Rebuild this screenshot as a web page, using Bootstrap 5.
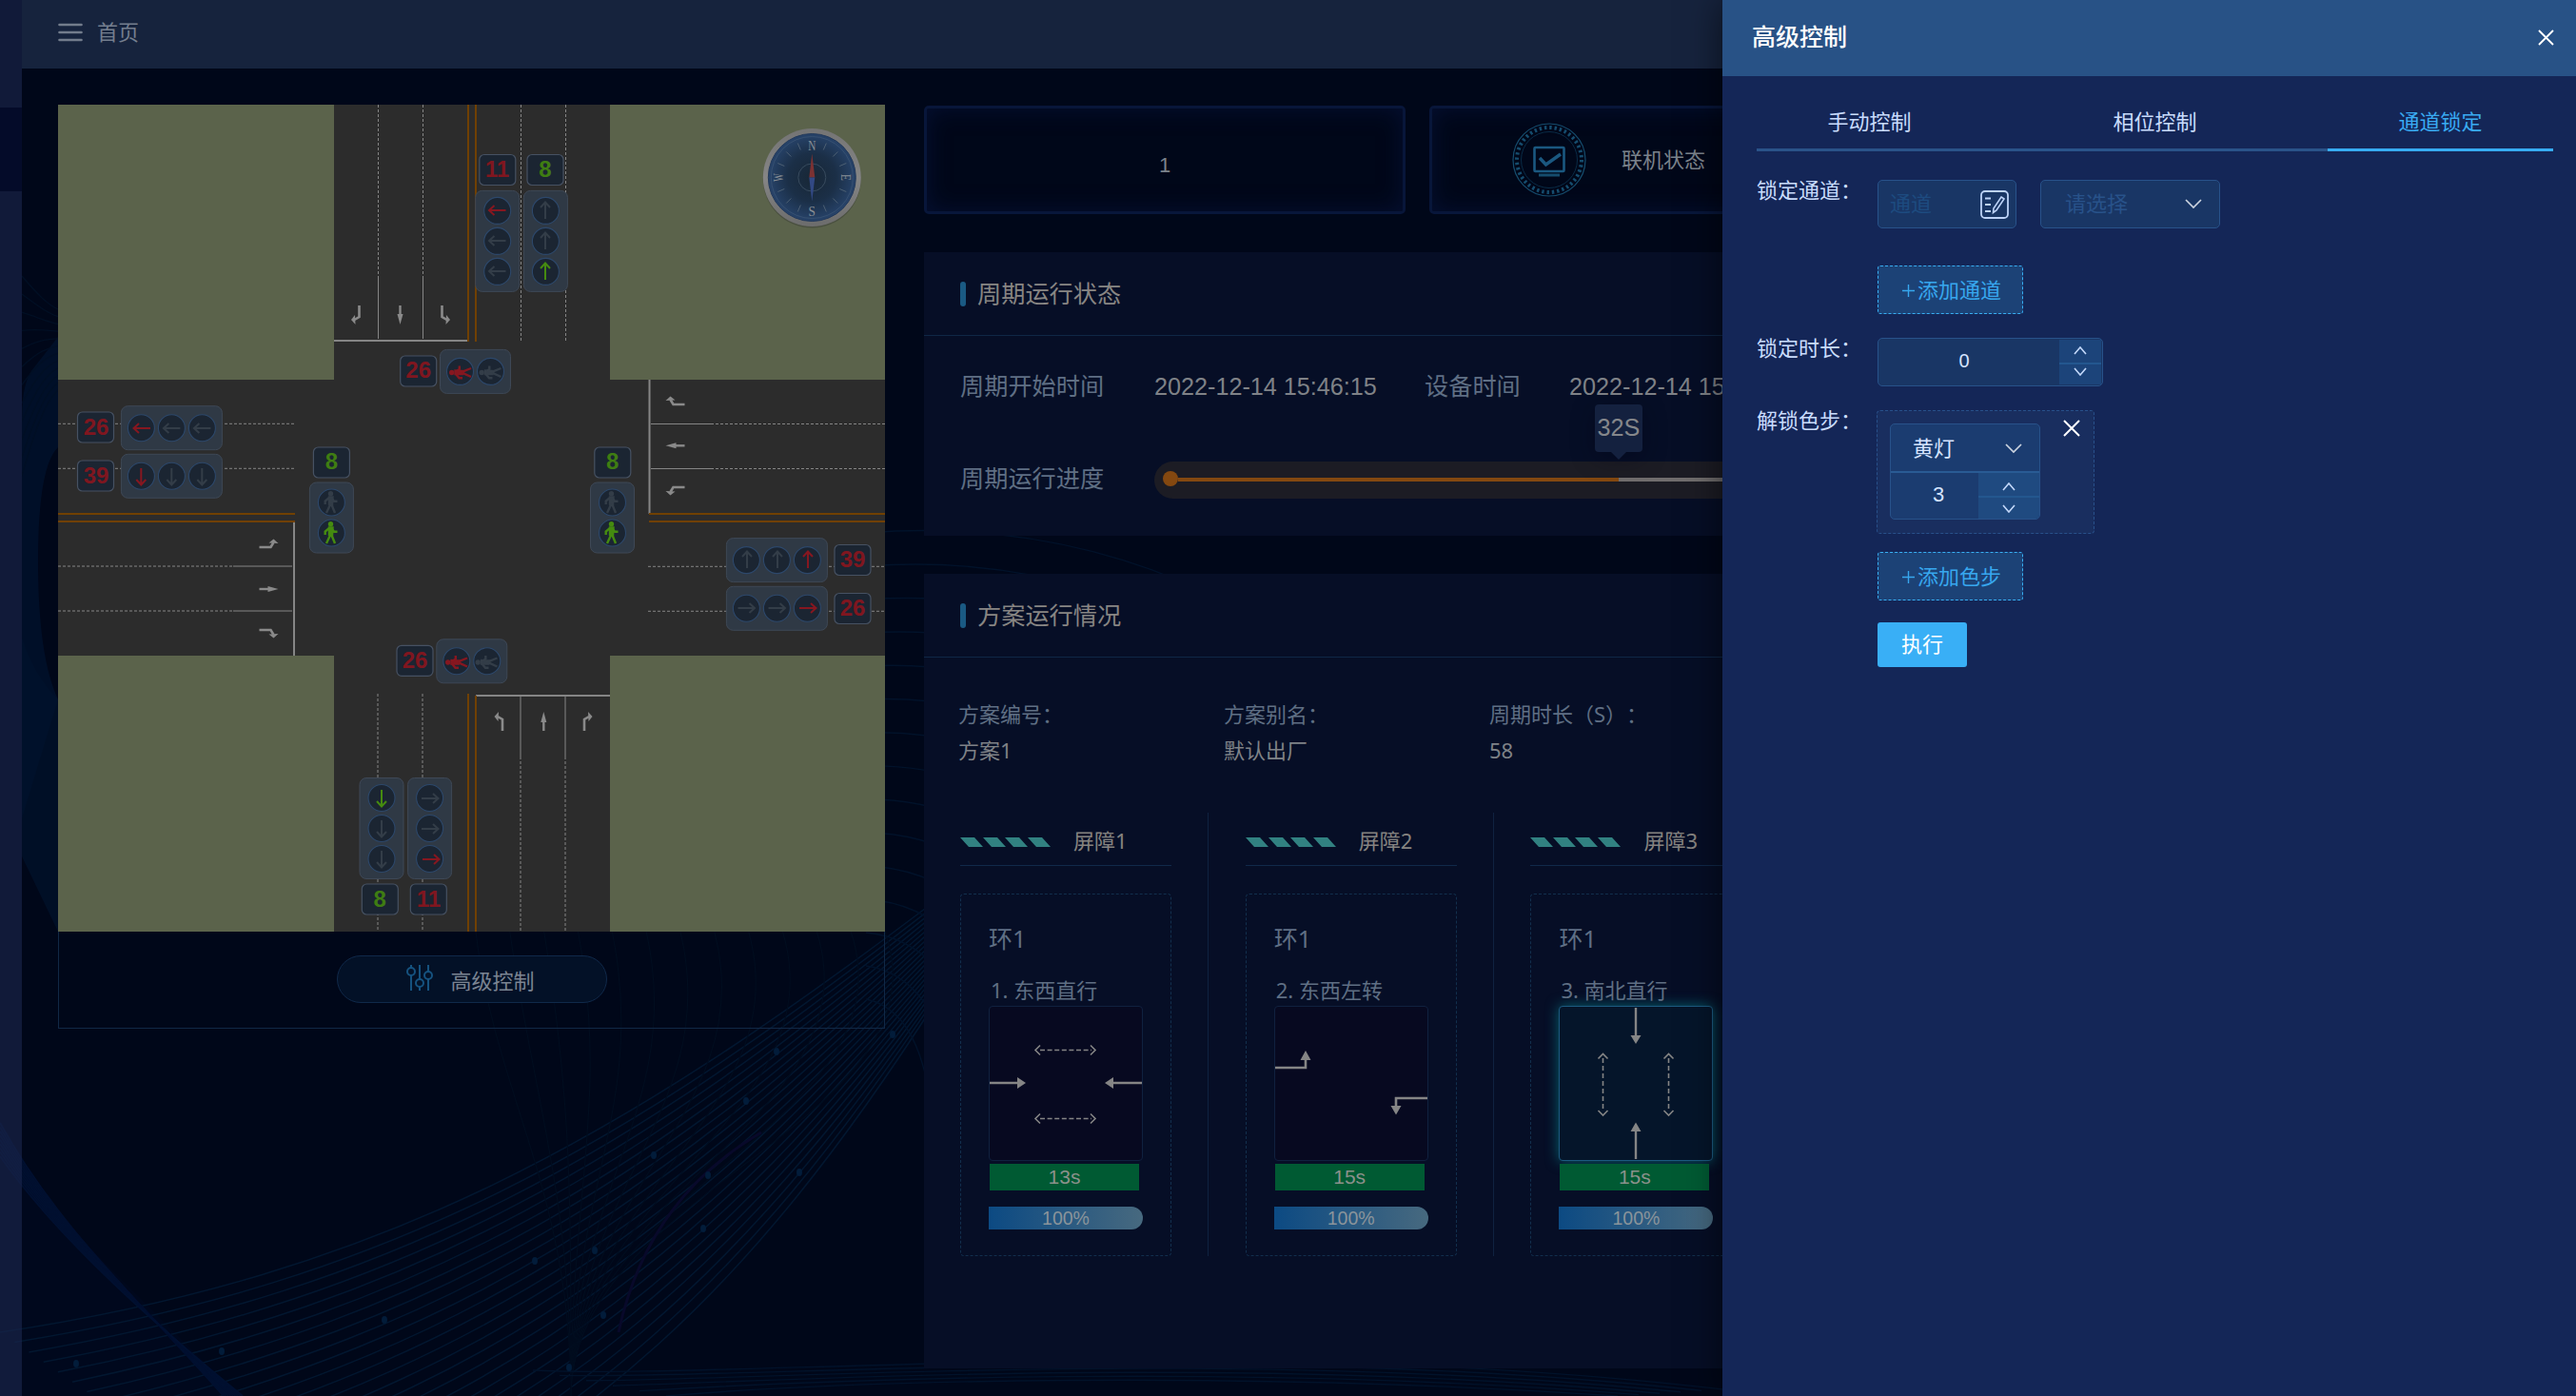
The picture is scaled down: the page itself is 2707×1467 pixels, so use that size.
<!DOCTYPE html>
<html lang="zh-CN">
<head>
<meta charset="utf-8">
<title>首页</title>
<link href="https://cdn.jsdelivr.net/npm/bootstrap@5.3.0/dist/css/bootstrap.min.css" rel="stylesheet">
<style>
html,body{height:100%;overflow:hidden}
body{background:#000719;color:#7f8287;font:22px/30px "Liberation Sans","Noto Sans CJK SC",sans-serif;text-spacing-trim:space-all}
.ui-font{font-family:"Noto Sans","Noto Sans CJK SC",sans-serif}
.app-shell{height:1467px;width:2707px;position:relative;overflow:hidden}
.wave-bg{position:absolute;inset:0;width:100%;height:100%;fill:none}
.side-strip{width:23px;background:rgba(28,38,78,.62)}
.side-strip .active-item{margin-top:113px;height:88px;background:#040b29}
.top-bar{height:72px;background:#16233d;padding:0 38px 4px;color:#747e8e;gap:15px}
.top-bar span{padding-bottom:3px}
.content-area{padding:38px 38px 0;gap:41px}
.map-col{width:869px;height:970.5px;border:1px solid #112846;border-top:0}
.map-col .map-svg{display:block;margin:0 -1px;width:869px;height:869px}
.ctl-btn{width:284px;height:50px;margin-top:25px;border:1px solid #10294a;background:#031127;color:#7b8492;border-radius:25px;gap:18px;padding:5px 2px 0 0}
.right-col{width:1698px;padding-top:1px;gap:40px}
.stat-card{width:506px;height:114px;border:3px solid #08163a;border-radius:5px;box-shadow:inset 0 0 24px #051032;gap:38px;color:#7b828b}
.info-panel{background:#060e26;width:100%}
.panel-head{height:88px;border-bottom:1px solid #0f2746;padding-left:38px;gap:12px;font-size:25.2px;color:#878583}
.panel-head i{width:6px;height:26px;border-radius:3px;background:#1a5a83}
.time-row{padding:0 38px 0 38px;font-size:25.2px;height:36px}
.tag-label{color:#5f6f84}
.track{height:39px;border-radius:20px;background:#1c1c24;padding-left:9px;width:1200px}
.track .dot{width:16px;height:16px;border-radius:50%;background:#844810;margin-top:-3px}
.track .done{height:4px;background:#844810}
.track .rest{height:4px;background:#706d6d}
.tip-box{width:50px;height:50px;border-radius:4px;background:#14213f;left:463px;top:-60px;padding-bottom:2px;position:absolute;color:#85878b;box-shadow:0 6px 24px rgba(0,0,20,.35)}
.tip-box::after{content:"";position:absolute;left:17px;top:50px;border:8px solid transparent;border-top-color:#14213f;border-bottom:0}
.barrier{width:222px}
.barrier-sep{width:1px;background:#0f2240;margin:0 38.35px 0 38.35px}
.barrier-head{height:56px;border-bottom:1px solid #10294a;padding:7px 0 0;gap:24px;color:#858380}
.barrier-head span{padding-bottom:4px}
.ring-box{margin-top:29px;height:381px;border:1px dashed #122f4d;border-radius:4px;padding:31px 29px 0}
.phase-name{margin-top:24px;line-height:31px;padding:0 0 1px 2px}
.phase-box{width:162px;height:163px;border:1px solid #10213f;border-radius:4px;background:#070920;display:block}
.phase-box.on{background:#05152a;border-color:#1c5a80;box-shadow:0 0 14px #07606e}
.green-bar{width:157px;height:28px;background:#005a33;margin:3px 0 0 1px;font:21px/27px "Liberation Sans",sans-serif;color:#8b918b}
.pct-bar{width:162px;height:24px;margin-top:17px;border-radius:0 12px 12px 0;background:linear-gradient(90deg,#0c4a83,#47697f);font:19.5px/25px "Liberation Sans",sans-serif;color:#8a949b}
.drawer{position:absolute;right:0;top:0;width:897px;height:100%;background:#142657;color:#c9dcfd;box-shadow:0 0 36px rgba(0,0,0,.6)}
.drawer-head{height:80px;background:#285286;padding:0 23px 2px 31px;font-size:25px;font-weight:500;color:#fff}
.drawer-body{padding:33px 24px 0 36px}
.tab-row{border-bottom:3px solid #2a5389;height:46px}
.tab-row div{width:237px;height:46px;line-height:31px;text-align:center}
.tab-row .on{color:#39abf2;border-bottom:3px solid #37acf3}
.form-label-x{width:127px;line-height:24px}
.field{border:1px solid #28528a;background:#193665;border-radius:5px;height:51px;color:#28528a}
.dash-btn{width:153px;height:51px;border:1px dashed #38aef3;background:#1c4276;color:#37a7ee;border-radius:3px;gap:3px;padding:2px 0 0 3px}
.stepper{background:#1c447a}
.stepper div{height:50%}
.stepper div+div{border-top:2px solid #23578f}
.step-card{width:229px;height:130px;border:1px dashed #28508a;background:#192e5f;border-radius:4px;padding:13px;margin-left:-1px}
.step-group{width:158px;height:101px;border:1px solid #28528a;background:#1b3c70;border-radius:5px;overflow:hidden;color:#d5e4ff}
.run-btn{width:94px;height:47px;background:#39aff6;color:#fff;border-radius:3px}
svg text{font-family:"Liberation Sans",sans-serif;font-weight:700;text-anchor:middle}
svg .rose-letters text{font-family:"Liberation Serif",serif;font-weight:400}
</style>
<script src="https://cdn.jsdelivr.net/npm/bootstrap@5.3.0/dist/js/bootstrap.bundle.min.js"></script>
</head>
<body>
<div class="app-shell d-flex">
  <svg class="wave-bg" viewBox="0 0 2707 1467" id="waves"></svg>
  <aside class="side-strip position-relative flex-shrink-0"><div class="active-item"></div></aside>
  <main class="flex-grow-1 position-relative">
    <header class="top-bar d-flex align-items-center ui-font">
      <svg width="26" height="20" stroke="#727c8c" stroke-width="2.6" stroke-linecap="round"><path d="M1.5 2H24.5M1.5 10H24.5M1.5 18H24.5"/></svg>
      <span>首页</span>
    </header>
    <div class="content-area d-flex">
      <section class="map-col flex-shrink-0">
        <svg class="map-svg" viewBox="61 110 869 869">
          <defs>
            <g id="ms"><path d="M0 10V-1" stroke="#8a8a8a" stroke-width="2.4"/><path d="M0 -10L3 1H-3Z" fill="#8a8a8a"/></g>
            <g id="mr"><path d="M-3 10V-2L2 -5" stroke="#8a8a8a" stroke-width="2.6" fill="none"/><path d="M1 -10L5.5 -5L1.5 0Z" fill="#8a8a8a"/></g>
            <g id="ml"><use href="#mr" transform="scale(-1 1)"/></g>
            <g id="lc"><circle r="14" fill="#1b2532" stroke="#2d486b" stroke-width="1.1"/></g>
            <g id="ar" fill="none" stroke="currentColor" stroke-width="2"><path d="M0 9V-8M-5 -3L0 -8.5L5 -3"/></g>
            <g id="pd" fill="none" stroke="currentColor" stroke-width="2.4"><circle cx="-.5" cy="-9.3" r="2.7" fill="currentColor" stroke="none"/><path d="M-2 -5.5H1.5L1 3L-2 2Z" fill="currentColor"/><path d="M-2 -5L-6.3 -1.5V2M1 -4L3 -1.2H6.5M-.8 2L-5 11M.3 2L4 11"/></g>
            <g id="bx"><rect x="-19" y="-16" width="38" height="32" rx="5" fill="#1b2532" stroke="#465162" stroke-width="1.2"/></g>
            <g id="v3"><rect x="-23" y="-53" width="46" height="106" rx="7" fill="#2f3945" stroke="#3e4856"/><use href="#lc" y="-32"/><use href="#lc"/><use href="#lc" y="32"/></g>
            <g id="v2"><rect x="-23" y="-37" width="46" height="74" rx="7" fill="#2f3945" stroke="#3e4856"/><use href="#lc" y="-16"/><use href="#lc" y="16"/></g>
            <radialGradient id="cg"><stop offset="0" stop-color="#182736"/><stop offset=".55" stop-color="#1b2f47"/><stop offset="1" stop-color="#27436a"/></radialGradient>
            <linearGradient id="rim" x2="0" y2="1"><stop offset="0" stop-color="#747474"/><stop offset=".5" stop-color="#858585"/><stop offset="1" stop-color="#6c6c6c"/></linearGradient>
          </defs>
          <rect x="61" y="110" width="869" height="869" fill="#2c2c2c"/>
          <path d="M61 110H351V399H61ZM641 110H930V399H641ZM61 689H351V979H61ZM641 689H930V979H641Z" fill="#5b634b"/>
          <g fill="none" stroke="#858585">
            <path stroke-dasharray="3 2" d="M397.5 110V293M444.5 110V293M547.5 110V359M594.5 110V359M61 445.3H310M61 492.3H310M61 595H245M61 642H245M747 445.5H930M747 492.5H930M681 595.3H930M681 642.3H930M397 729V979M444 729V979M547 795V979M594 795V979"/>
            <path d="M397.5 293V356M444.5 293V356M245 595H307M245 642H307M684 445.5H747M684 492.5H747M547 732V795M594 732V795"/>
            <path stroke-width="2" d="M351 358H492M309 547V689M682.5 399V540M500 731H641"/>
            <path stroke="#704000" stroke-width="2" d="M492 110V359M500 110V359M61 540H310M61 548H310M682 540H930M682 548H930M492 729V979M500 731V979"/>
          </g>
          <use href="#mr" transform="translate(374.5 331) rotate(180)"/><use href="#ms" transform="translate(420.5 331) rotate(180)"/><use href="#ml" transform="translate(467.5 331) rotate(180)"/>
          <use href="#ml" x="525" y="758"/><use href="#ms" x="571.3" y="758"/><use href="#mr" x="617" y="758"/>
          <use href="#ml" transform="translate(282.5 572) rotate(90)"/><use href="#ms" transform="translate(282.5 619) rotate(90)"/><use href="#mr" transform="translate(282.5 665) rotate(90)"/>
          <use href="#mr" transform="translate(709.5 422) rotate(-90)"/><use href="#ms" transform="translate(709.5 468.3) rotate(-90)"/><use href="#ml" transform="translate(709.5 515) rotate(-90)"/>

          <use href="#v3" x="522.7" y="253.4"/><use href="#v3" x="573.4" y="253.4"/>
          <use href="#v3" transform="translate(180.4 449.7) rotate(90)"/><use href="#v3" transform="translate(180.4 500.3) rotate(90)"/>
          <use href="#v3" transform="translate(816.4 588.6) rotate(90)"/><use href="#v3" transform="translate(816.4 639.3) rotate(90)"/>
          <use href="#v3" x="401" y="870.5"/><use href="#v3" x="451.6" y="870.5"/>
          <use href="#v2" transform="translate(499.5 390.4) rotate(90)"/><use href="#v2" transform="translate(495.8 694.8) rotate(90)"/>
          <use href="#v2" x="348.4" y="544"/><use href="#v2" x="643.5" y="544"/>
          <use href="#bx" x="522.8" y="178.5"/><use href="#bx" x="573" y="178.5"/><use href="#bx" x="439.7" y="390"/><use href="#bx" x="436" y="694.3"/>
          <use href="#bx" x="100.5" y="449"/><use href="#bx" x="100.5" y="500"/><use href="#bx" x="348.4" y="486"/><use href="#bx" x="643.8" y="486"/>
          <use href="#bx" x="896" y="588.5"/><use href="#bx" x="896" y="639.5"/><use href="#bx" x="399.3" y="945"/><use href="#bx" x="450.3" y="945"/>

          <g color="#333d48">
            <use href="#ar" transform="translate(522.5 253) rotate(-90)"/><use href="#ar" transform="translate(522.5 285) rotate(-90)"/>
            <use href="#ar" x="573" y="221"/><use href="#ar" x="573" y="253"/>
            <use href="#ar" transform="translate(180.4 450) rotate(-90)"/><use href="#ar" transform="translate(212.4 450) rotate(-90)"/>
            <use href="#ar" transform="translate(180.3 501) rotate(180)"/><use href="#ar" transform="translate(212.3 501) rotate(180)"/>
            <use href="#ar" x="785" y="588"/><use href="#ar" x="817" y="588"/>
            <use href="#ar" transform="translate(784.5 639) rotate(90)"/><use href="#ar" transform="translate(816.5 639) rotate(90)"/>
            <use href="#ar" transform="translate(401 871) rotate(180)"/><use href="#ar" transform="translate(401 903) rotate(180)"/>
            <use href="#ar" transform="translate(452 839) rotate(90)"/><use href="#ar" transform="translate(452 871) rotate(90)"/>
            <use href="#pd" transform="translate(515.5 391) rotate(-90)"/><use href="#pd" transform="translate(511.5 695.5) rotate(-90)"/>
            <use href="#pd" x="348" y="528"/><use href="#pd" x="643" y="528"/>
          </g>
          <g color="#861720">
            <use href="#ar" transform="translate(522.5 221) rotate(-90)"/><use href="#ar" transform="translate(149 450) rotate(-90)"/>
            <use href="#ar" transform="translate(148.3 501) rotate(180)"/><use href="#ar" x="849" y="588"/>
            <use href="#ar" transform="translate(849 639) rotate(90)"/><use href="#ar" transform="translate(453 903) rotate(90)"/>
            <use href="#pd" transform="translate(484 391) rotate(-90)"/><use href="#pd" transform="translate(480 695.5) rotate(-90)"/>
          </g>
          <g color="#458b10"><use href="#ar" x="573" y="285"/><use href="#ar" transform="translate(401 839) rotate(180)"/><use href="#pd" x="348" y="560"/><use href="#pd" x="643" y="560"/></g>
          <g fill="#80161f" font-size="24">
            <text x="522.5" y="186">11</text><text x="439.7" y="397">26</text><text x="436" y="702">26</text><text x="101" y="457">26</text><text x="101" y="508">39</text>
            <text x="896" y="596">39</text><text x="896" y="647">26</text><text x="450.5" y="953">11</text>
            <g fill="#3f7d12"><text x="573" y="186">8</text><text x="348.5" y="493">8</text><text x="643.8" y="493">8</text><text x="399.3" y="953">8</text></g>
          </g>
          <g transform="translate(853.3 186.5)">
            <circle cy="1.5" r="51.5" fill="#4a5040"/><circle r="51.5" fill="url(#rim)"/><circle r="46" fill="url(#cg)" stroke="#23395a"/>
            <circle r="43" fill="none" stroke="#3b5473" stroke-width=".8"/><circle r="14.5" fill="none" stroke="#384b5e"/>
            <path stroke="#4d6074" d="M12 -29L15 -36M-12 -29L-15 -36M12 29L15 36M-12 29L-15 36M29 -12L36 -15M-29 -12L-36 -15M29 12L36 15M-29 12L-36 15M22 -22L27 -27M-22 -22L-27 -27M22 22L27 27M-22 22L-27 27"/>
            <path d="M0 -25L3 0H-3Z" fill="#7c3233"/><path d="M0 25L3 0H-3Z" fill="#324985"/>
            <g class="rose-letters" fill="#8a9096" font-size="14"><text transform="translate(0 -29) scale(.8 1.1)">N</text><text transform="translate(0 40) scale(.95 1.1)">S</text><text transform="translate(30.5 0) rotate(90) scale(.8 1.1)">E</text><text transform="translate(-30.5 0) rotate(-90) scale(.65 1.1)">W</text></g>
          </g>
        </svg>
        <div class="ctl-btn d-flex align-items-center justify-content-center mx-auto">
          <svg width="28" height="27" fill="none" stroke="#15527f" stroke-width="2" style="margin-top:-8px"><path d="M5 0V3M5 11V27M14 0V15M14 23V27M23 0V7M23 15V27"/><circle cx="5" cy="7" r="4"/><circle cx="14" cy="19" r="4"/><circle cx="23" cy="11" r="4"/></svg>
          <span>高级控制</span>
        </div>
      </section>

      <section class="right-col d-flex flex-column flex-shrink-0">
        <div class="d-flex" style="gap:25px">
          <div class="stat-card d-flex align-items-center justify-content-center" style="padding-top:11px">1</div>
          <div class="stat-card d-flex align-items-center ps-5">
            <svg width="78" height="78" viewBox="-39 -39 78 78" fill="none" stroke="#154c6d" style="margin-left:36px"><circle r="38" stroke-width="1.2"/><circle r="34" stroke-width="4" stroke-dasharray="2.4 2.94"/><circle r="29.5" stroke="#092b46"/><rect x="-15.5" y="-13" width="31" height="25" rx="1" stroke="#1a5880" stroke-width="2.6"/><path d="M-10 -2L-3.5 5L12 -6" stroke="#1a5880" stroke-width="3.4"/><path d="M-11 16H11" stroke="#154c6d" stroke-width="3"/></svg>
            <span style="padding-top:2px;margin-left:-1px">联机状态</span>
          </div>
          <div class="stat-card"></div>
        </div>

        <div class="info-panel" style="height:298px">
          <div class="panel-head d-flex align-items-center"><i></i><span>周期运行状态</span></div>
          <div class="time-row d-flex align-items-center text-nowrap" style="margin-top:35px">
            <span class="tag-label" style="width:204px">周期开始时间</span><span style="width:284px">2022-12-14 15:46:15</span><span class="tag-label" style="width:152px">设备时间</span><span>2022-12-14 15:46:47</span>
          </div>
          <div class="time-row d-flex align-items-center" style="margin-top:62px">
            <span class="tag-label flex-shrink-0" style="width:204px;padding-bottom:2px">周期运行进度</span>
            <div class="track position-relative d-flex align-items-center"><span class="dot"></span><span class="done" style="width:463px"></span><span class="rest flex-grow-1"></span>
              <div class="tip-box d-flex align-items-center justify-content-center">32S</div></div>
          </div>
        </div>

        <div class="info-panel" style="height:835px">
          <div class="panel-head d-flex align-items-center"><i></i><span>方案运行情况</span></div>
          <div class="d-flex ui-font" style="padding:40px 0 0 36px;line-height:38px">
            <div style="width:279px"><div class="tag-label">方案编号：</div><div>方案1</div></div>
            <div style="width:279px"><div class="tag-label">方案别名：</div><div>默认出厂</div></div>
            <div style="width:279px"><div class="tag-label">周期时长（S）：</div><div>58</div></div>
          </div>
          <div class="d-flex ui-font" style="padding:47px 0 0 38px">
            <div class="barrier flex-shrink-0">
              <div class="barrier-head d-flex align-items-center"><svg width="95" height="10" fill="#318181"><path d="M0 0H15L24 10H9ZM24 0H39L48 10H33ZM47 0H62L71 10H56ZM71 0H86L95 10H80Z"/></svg><span>屏障1</span></div>
              <div class="ring-box"><div class="tag-label" style="font-size:25px">环1</div>
                <div class="tag-label phase-name">1. 东西直行</div>
                <svg class="phase-box" viewBox="0 0 160 161"><path d="M0 80H30M160 80H130" stroke="#858585" stroke-width="2.6"/><path d="M38 80L29 74V86ZM121 80L130 74V86Z" fill="#858585"/><path d="M53 45.5H107M53 117.5H107" stroke="#858585" stroke-width="1.6" stroke-dasharray="5 2.6"/><path d="M53 40.5L48 45.5L53 50.5M106 40.5L111 45.5L106 50.5M53 112.5L48 117.5L53 122.5M106 112.5L111 117.5L106 122.5" fill="none" stroke="#858585" stroke-width="1.6"/></svg>
                <div class="green-bar text-center">13s</div><div class="pct-bar text-center">100%</div></div>
            </div>
            <div class="barrier-sep"></div>
            <div class="barrier flex-shrink-0">
              <div class="barrier-head d-flex align-items-center"><svg width="95" height="10" fill="#318181"><path d="M0 0H15L24 10H9ZM24 0H39L48 10H33ZM47 0H62L71 10H56ZM71 0H86L95 10H80Z"/></svg><span>屏障2</span></div>
              <div class="ring-box"><div class="tag-label" style="font-size:25px">环1</div>
                <div class="tag-label phase-name">2. 东西左转</div>
                <svg class="phase-box" viewBox="0 0 160 161"><path d="M0 64H32V55M160 96H127V105" fill="none" stroke="#858585" stroke-width="2.6"/><path d="M32 46L37.5 56H26.5ZM127 113.5L132.5 104H121.5Z" fill="#858585"/></svg>
                <div class="green-bar text-center">15s</div><div class="pct-bar text-center">100%</div></div>
            </div>
            <div class="barrier-sep"></div>
            <div class="barrier flex-shrink-0">
              <div class="barrier-head d-flex align-items-center"><svg width="95" height="10" fill="#318181"><path d="M0 0H15L24 10H9ZM24 0H39L48 10H33ZM47 0H62L71 10H56ZM71 0H86L95 10H80Z"/></svg><span>屏障3</span></div>
              <div class="ring-box"><div class="tag-label" style="font-size:25px">环1</div>
                <div class="tag-label phase-name">3. 南北直行</div>
                <svg class="phase-box on" viewBox="0 0 160 161"><path d="M80 1V31M80 160V130" stroke="#858585" stroke-width="2.4"/><path d="M80 39L74.5 30H85.5ZM80 121.5L74.5 131H85.5Z" fill="#858585"/><path d="M45.5 54V110M114.5 54V110" stroke="#858585" stroke-width="1.6" stroke-dasharray="5 3"/><path d="M40.5 54.5L45.5 49.5L50.5 54.5M109.5 54.5L114.5 49.5L119.5 54.5M40.5 109L45.5 114L50.5 109M109.5 109L114.5 114L119.5 109" fill="none" stroke="#858585" stroke-width="1.6"/></svg>
                <div class="green-bar text-center">15s</div><div class="pct-bar text-center">100%</div></div>
            </div>
          </div>
        </div>
      </section>
    </div>
  </main>

  <aside class="drawer">
    <div class="drawer-head d-flex align-items-center justify-content-between"><span>高级控制</span>
      <svg width="17" height="17" stroke="#fff" stroke-width="1.9"><path d="M1 1L16 16M16 1L1 16"/></svg></div>
    <div class="drawer-body">
      <div class="tab-row d-flex justify-content-between"><div>手动控制</div><div>相位控制</div><div class="on">通道锁定</div></div>
      <div class="d-flex" style="margin-top:30px">
        <div class="form-label-x">锁定通道：</div>
        <div class="field d-flex align-items-center justify-content-between" style="width:146px;padding:1px 7px 0 12px"><span style="color:#1d4b80">通道</span>
          <svg width="30" height="30" fill="none" stroke="#bcd2f8" stroke-width="1.8"><rect x="1" y="1" width="28" height="28" rx="4"/><path d="M5 8.5H11M5 15H11M5 22H11"/><path d="M22 7L25 9L17 21L13.5 23.5L14 19Z" stroke-width="1.6"/></svg></div>
        <div class="field d-flex align-items-center justify-content-between" style="width:189px;margin-left:25px;padding:0 18px 0 25px"><span>请选择</span><svg width="18" height="11" fill="none" stroke="#cbd3df" stroke-width="1.7"><path d="M1 1L9 9L17 1"/></svg></div>
      </div>
      <div class="dash-btn d-flex align-items-center justify-content-center" style="margin:39px 0 0 127px"><svg width="13" height="13" stroke="#37a7ee" stroke-width="1.4"><path d="M6.5 0V13M0 6.5H13"/></svg>添加通道</div>
      <div class="d-flex" style="margin-top:25px">
        <div class="form-label-x">锁定时长：</div>
        <div class="field d-flex" style="width:237px;padding:1px"><div class="flex-grow-1 text-center" style="color:#d5e4ff;font-size:20px;line-height:45px;padding-right:11px">0</div>
          <div class="stepper" style="width:44px"><div class="d-flex align-items-center justify-content-center"><svg width="14" height="9" fill="none" stroke="#c3d8fa" stroke-width="1.6"><path d="M1 8L7 1L13 8"/></svg></div><div class="d-flex align-items-start pt-2 justify-content-center"><svg width="14" height="9" fill="none" stroke="#c3d8fa" stroke-width="1.6" style="margin-top:-5px"><path d="M1 1L7 8L13 1"/></svg></div></div></div>
      </div>
      <div class="d-flex" style="margin-top:25px">
        <div class="form-label-x">解锁色步：</div>
        <div class="step-card d-flex">
          <div class="step-group d-flex flex-column">
            <div class="d-flex align-items-center justify-content-between" style="height:51px;padding:2px 18px 0 23px;border-bottom:2px solid #295b94"><span>黄灯</span><svg width="18" height="11" fill="none" stroke="#cbd3df" stroke-width="1.7"><path d="M1 1L9 9L17 1"/></svg></div>
            <div class="d-flex flex-grow-1"><div class="text-center" style="width:92px;padding-left:8px;line-height:46px">3</div>
              <div class="stepper flex-grow-1" style="background:#1f4a80"><div class="d-flex align-items-center justify-content-center pt-1"><svg width="14" height="9" fill="none" stroke="#c3d8fa" stroke-width="1.6"><path d="M1 8L7 1L13 8"/></svg></div><div class="d-flex align-items-center justify-content-center"><svg width="14" height="9" fill="none" stroke="#c3d8fa" stroke-width="1.6"><path d="M1 1L7 8L13 1"/></svg></div></div></div>
          </div>
          <svg width="18" height="18" stroke="#fff" stroke-width="2" style="margin:-4px 0 0 24px"><path d="M1 1L17 17M17 1L1 17"/></svg>
        </div>
      </div>
      <div class="dash-btn d-flex align-items-center justify-content-center" style="margin:19px 0 0 127px"><svg width="13" height="13" stroke="#37a7ee" stroke-width="1.4"><path d="M6.5 0V13M0 6.5H13"/></svg>添加色步</div>
      <div class="run-btn d-flex align-items-center justify-content-center" style="margin:23px 0 0 127px">执行</div>
    </div>
  </aside>
</div>
<script>
// Background wave bundles: each blends between two cubic curves
function bundle(a,b,n,color,w){
  let s='';
  for(let i=0;i<n;i++){const t=i/(n-1),p=a.map((v,k)=>(v+(b[k]-v)*t).toFixed(1));
    s+=`<path d="M${p[0]} ${p[1]}C${p[2]} ${p[3]} ${p[4]} ${p[5]} ${p[6]} ${p[7]}" stroke="${color}" stroke-width="${w}"/>`;}
  return s;
}
document.getElementById('waves').innerHTML=
  '<path d="M0 1195L23 1240L250 1467H0Z" fill="#000d28" opacity=".3"/>'+
  '<path d="M61 354L36 386Q23 400 23 440V860L61 735Q40 690 40 590T61 470Z" fill="#00122c" opacity=".8"/>'+
  '<path d="M23 670Q36 710 61 735V979L23 900Z" fill="#00132c" opacity=".7"/>'+
  bundle([0,1400,400,1340,650,1200,985,945],[350,1640,620,1500,780,1370,985,1050],24,'#021730',1.5)+
  bundle([0,1180,60,1290,150,1370,235,1467],[0,1215,60,1300,160,1390,255,1467],9,'#001030',2)+
  bundle([500,979,520,1150,600,1250,600,1467],[930,979,1000,1180,600,1250,600,1467],13,'#010d1f',1.2)+
  bundle([910,560,1100,545,1250,600,1370,680],[910,1050,960,1060,975,1120,985,1200],15,'#01122a',1.4)+
  bundle([23,290,40,310,50,320,61,325],[23,500,40,440,50,420,61,410],12,'#000f24',1.3)+
  bundle([560,1440,760,1450,1300,1400,1810,1460],[700,1467,900,1450,1300,1440,1700,1467],6,'#01122a',1.4)+
  '<path d="M650 1400Q680 1260 800 1190" stroke="#08092a" stroke-width="3"/>'+
  [[816,1105],[784,1157],[687,1214],[744,1235],[840,1232],[739,1291],[562,1325],[625,1314],[404,1387],[634,1382],[233,1420],[80,1433],[598,1437],[938,1087]]
    .map(p=>`<ellipse cx="${p[0]}" cy="${p[1]}" rx="3" ry="4" fill="#021c3a"/>`).join('');
</script>
</body>
</html>
